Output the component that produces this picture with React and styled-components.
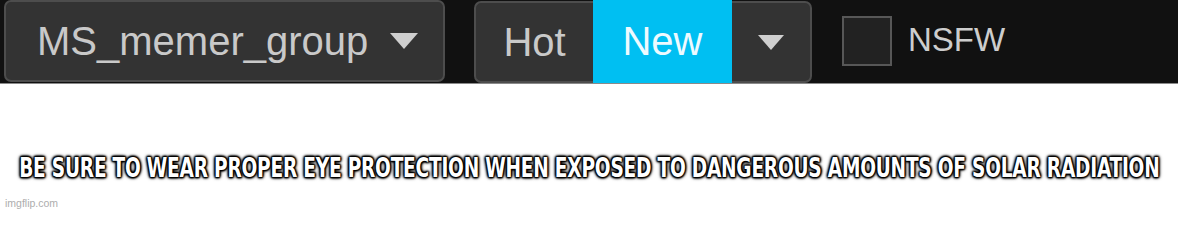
import React from "react";
import styled, { createGlobalStyle } from "styled-components";

const Global = createGlobalStyle`
  html, body { margin: 0; padding: 0; background: #fff; }
  body { font-family: "Liberation Sans", Arial, sans-serif; }
`;

const Page = styled.div`
  width: 1178px;
  height: 212px;
  display: flex;
  flex-direction: column;
  overflow: hidden;
`;

const Toolbar = styled.div`
  height: 84px;
  box-sizing: border-box;
  background: #111;
  display: flex;
  align-items: center;
  padding: 0 0 1px 4px;
  border-bottom: 1px solid #8a8a8a;
`;

const Dropdown = styled.div`
  box-sizing: border-box;
  width: 441px;
  height: 82px;
  display: flex;
  align-items: center;
  padding: 0 25px 0 31px;
  background: #333;
  border: 2px solid #4d4d4d;
  border-radius: 7px;
  color: #c9c9c9;
  font-size: 40px;
`;

const Caret = styled.span`
  width: 0;
  height: 0;
  margin-left: auto;
  border-left: 14px solid transparent;
  border-right: 14px solid transparent;
  border-top: 16px solid #cfcfcf;
`;

const Group = styled.div`
  display: flex;
  margin-left: 29px;
  height: 83px;
  align-self: flex-start;
`;

const Segment = styled.div`
  box-sizing: border-box;
  width: ${(p) => p.$w}px;
  display: flex;
  align-items: center;
  justify-content: center;
  font-size: 40px;
  background: ${(p) => (p.$active ? "#00bff2" : "#333")};
  color: ${(p) => (p.$active ? "#eefaff" : "#c9c9c9")};
  border: ${(p) => (p.$active ? "none" : "2px solid #4d4d4d")};
  border-left-width: ${(p) => (p.$pos === "first" ? "2px" : "0")};
  border-right-width: ${(p) => (p.$pos === "last" ? "2px" : "0")};
  border-radius: ${(p) =>
    p.$pos === "first" ? "7px 0 0 7px" : p.$pos === "last" ? "0 7px 7px 0" : "0"};
  margin-top: ${(p) => (p.$active ? "0" : "1px")};
  height: ${(p) => (p.$active ? "83px" : "82px")};
`;

const SegCaret = styled.span`
  width: 0;
  height: 0;
  border-left: 13px solid transparent;
  border-right: 13px solid transparent;
  border-top: 15px solid #cfcfcf;
`;

const Check = styled.span`
  box-sizing: border-box;
  width: 50px;
  height: 50px;
  margin-left: 30px;
  margin-top: -1px;
  background: #222;
  border: 2px solid #575757;
`;

const CheckLabel = styled.span`
  margin-left: 16px;
  margin-top: -2px;
  font-size: 33px;
  color: #cdcdcd;
`;

const Meme = styled.div`
  flex: 1;
  background: #fff;
  display: flex;
  flex-direction: column;
`;

const Caption = styled.div`
  margin-top: 70px;
  display: flex;
  justify-content: center;
`;

const CaptionText = styled.span`
  display: inline-block;
  white-space: nowrap;
  font-family: "DejaVu Sans Condensed", "Liberation Sans", sans-serif;
  font-weight: 700;
  font-size: 27px;
  line-height: 27px;
  color: #fff;
  letter-spacing: -0.3px;
  transform: scaleX(0.765);
  transform-origin: center;
  text-shadow: 0 0 2px #000, 0 0 3px #000, 0 0 4px #000, 0 0 5px #000,
    1px 1px 2px #000, -1px -1px 2px #000, 1px -1px 2px #000, -1px 1px 2px #000;
`;

const Watermark = styled.div`
  margin-top: auto;
  padding: 0 0 3px 5px;
  font-size: 10.5px;
  color: #adadad;
`;

export default function App() {
  return (
    <Page>
      <Global />
      <Toolbar>
        <Dropdown>
          <span>MS_memer_group</span>
          <Caret />
        </Dropdown>
        <Group>
          <Segment $w={119} $pos="first">Hot</Segment>
          <Segment $w={139} $active>New</Segment>
          <Segment $w={80} $pos="last">
            <SegCaret />
          </Segment>
        </Group>
        <Check />
        <CheckLabel>NSFW</CheckLabel>
      </Toolbar>
      <Meme>
        <Caption>
          <CaptionText>
            BE SURE TO WEAR PROPER EYE PROTECTION WHEN EXPOSED TO DANGEROUS AMOUNTS OF SOLAR RADIATION
          </CaptionText>
        </Caption>
        <Watermark>imgflip.com</Watermark>
      </Meme>
    </Page>
  );
}
